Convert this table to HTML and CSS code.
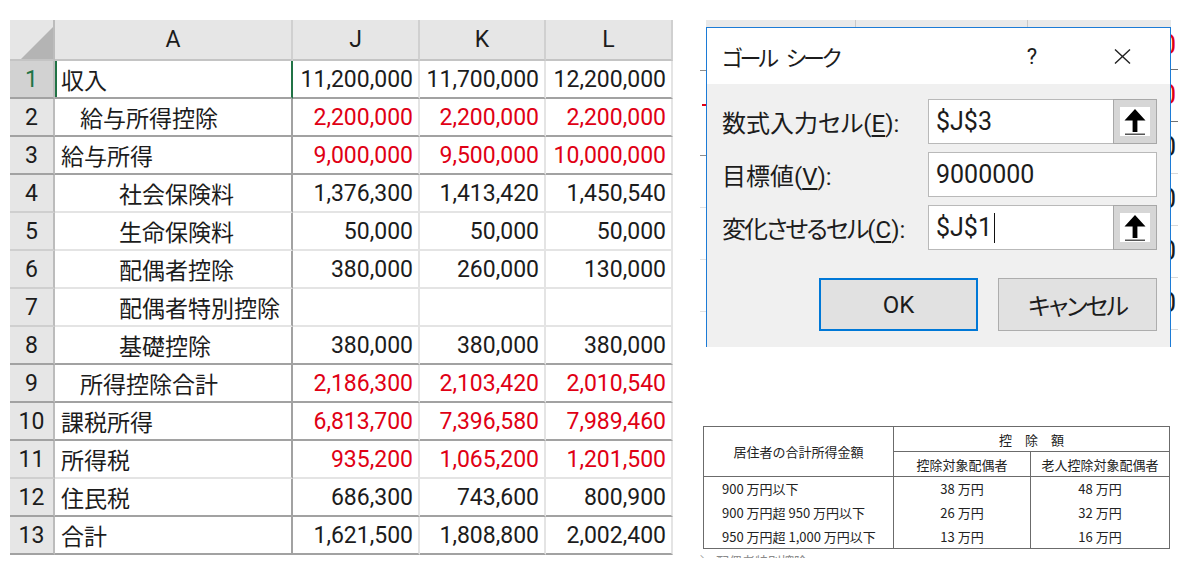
FILE: index.html
```html
<!DOCTYPE html>
<html>
<head>
    <link rel="stylesheet" href="styles.css">
</head>
<body>
    <div class="page">
        <div class="sheet">
            <div class="row head">
                <div class="corner"><span class="tri"></span></div>
                <div>A</div>
                <div>J</div>
                <div>K</div>
                <div>L</div>
            </div>
            <div class="row dk">
                <div class="rh sel">1</div>
                <div class="a cur">収入</div>
                <div class="n">11,200,000</div>
                <div class="n">11,700,000</div>
                <div class="n">12,200,000</div>
            </div>
            <div class="row dk red">
                <div class="rh">2</div>
                <div class="a i1">給与所得控除</div>
                <div class="n">2,200,000</div>
                <div class="n">2,200,000</div>
                <div class="n">2,200,000</div>
            </div>
            <div class="row dk red">
                <div class="rh">3</div>
                <div class="a">給与所得</div>
                <div class="n">9,000,000</div>
                <div class="n">9,500,000</div>
                <div class="n">10,000,000</div>
            </div>
            <div class="row">
                <div class="rh">4</div>
                <div class="a i2">社会保険料</div>
                <div class="n">1,376,300</div>
                <div class="n">1,413,420</div>
                <div class="n">1,450,540</div>
            </div>
            <div class="row">
                <div class="rh">5</div>
                <div class="a i2">生命保険料</div>
                <div class="n">50,000</div>
                <div class="n">50,000</div>
                <div class="n">50,000</div>
            </div>
            <div class="row">
                <div class="rh">6</div>
                <div class="a i2">配偶者控除</div>
                <div class="n">380,000</div>
                <div class="n">260,000</div>
                <div class="n">130,000</div>
            </div>
            <div class="row">
                <div class="rh">7</div>
                <div class="a i2">配偶者特別控除</div>
                <div class="n"></div>
                <div class="n"></div>
                <div class="n"></div>
            </div>
            <div class="row dk">
                <div class="rh">8</div>
                <div class="a i2">基礎控除</div>
                <div class="n">380,000</div>
                <div class="n">380,000</div>
                <div class="n">380,000</div>
            </div>
            <div class="row dk red">
                <div class="rh">9</div>
                <div class="a i1">所得控除合計</div>
                <div class="n">2,186,300</div>
                <div class="n">2,103,420</div>
                <div class="n">2,010,540</div>
            </div>
            <div class="row dk red">
                <div class="rh">10</div>
                <div class="a">課税所得</div>
                <div class="n">6,813,700</div>
                <div class="n">7,396,580</div>
                <div class="n">7,989,460</div>
            </div>
            <div class="row red">
                <div class="rh">11</div>
                <div class="a">所得税</div>
                <div class="n">935,200</div>
                <div class="n">1,065,200</div>
                <div class="n">1,201,500</div>
            </div>
            <div class="row dk">
                <div class="rh">12</div>
                <div class="a">住民税</div>
                <div class="n">686,300</div>
                <div class="n">743,600</div>
                <div class="n">800,900</div>
            </div>
            <div class="row dk">
                <div class="rh">13</div>
                <div class="a">合計</div>
                <div class="n">1,621,500</div>
                <div class="n">1,808,800</div>
                <div class="n">2,002,400</div>
            </div>
        </div>

        <div class="side">
            <div class="behind">
                <div class="bg-left">
                    <div class="lz dark"></div>
                    <div class="lz dark"><span class="dash"></span></div>
                    <div class="lz"></div>
                    <div class="lz"></div>
                    <div class="lz"></div>
                    <div class="lz"></div>
                </div>
                <div class="bg-top">
                    <div></div>
                    <div></div>
                    <div></div>
                </div>
                <div class="bg-right">
                    <div class="z first red">0</div>
                    <div class="z red">0</div>
                    <div class="z">0</div>
                    <div class="z">0</div>
                    <div class="z">0</div>
                    <div class="z">0</div>
                </div>

                <div class="dialog">
                    <div class="dlg-title">
                        <span class="dlg-name">ゴール<span class="gap"></span>シーク</span>
                        <span class="help">?</span>
                        <span class="close">
                            <svg width="17" height="15" viewBox="0 0 17 15">
                                <path d="M1 0.5 L16 14.5 M16 0.5 L1 14.5" stroke="#222" stroke-width="1.4" fill="none"/>
                            </svg>
                        </span>
                    </div>
                    <div class="dlg-form">
                        <div class="label">数式入力セル(<u>E</u>):</div>
                        <div class="field">
                            <span class="val">$J$3</span>
                            <span class="pick">
                                <svg width="30" height="29" viewBox="0 0 30 29">
                                    <rect width="30" height="29" fill="#fff"/>
                                    <path d="M15 2 L25.5 13.5 L17.4 13.5 L17.4 25 L12.6 25 L12.6 13.5 L4.5 13.5 Z" fill="#000"/>
                                    <rect x="5" y="26.5" width="20" height="1.5" fill="#555"/>
                                </svg>
                            </span>
                        </div>
                        <div class="label">目標値(<u>V</u>):</div>
                        <div class="field">
                            <span class="val">9000000</span>
                        </div>
                        <div class="label"><span class="tight">変化させるセル</span>(<u>C</u>):</div>
                        <div class="field">
                            <span class="val">$J$1<span class="caret"></span></span>
                            <span class="pick">
                                <svg width="30" height="29" viewBox="0 0 30 29">
                                    <rect width="30" height="29" fill="#fff"/>
                                    <path d="M15 2 L25.5 13.5 L17.4 13.5 L17.4 25 L12.6 25 L12.6 13.5 L4.5 13.5 Z" fill="#000"/>
                                    <rect x="5" y="26.5" width="20" height="1.5" fill="#555"/>
                                </svg>
                            </span>
                        </div>
                    </div>
                    <div class="dlg-buttons">
                        <div class="btn ok">OK</div>
                        <div class="btn jp">キャンセル</div>
                    </div>
                </div>
            </div>

            <table class="ded">
                <colgroup>
                    <col style="width: 190px">
                    <col style="width: 137px">
                    <col style="width: 139px">
                </colgroup>
                <thead>
                    <tr>
                        <th rowspan="2">居住者の合計所得金額</th>
                        <th colspan="2">控　除　額</th>
                    </tr>
                    <tr>
                        <th>控除対象配偶者</th>
                        <th>老人控除対象配偶者</th>
                    </tr>
                </thead>
                <tbody>
                    <tr>
                        <td class="lt">900 万円以下</td>
                        <td>38 万円</td>
                        <td>48 万円</td>
                    </tr>
                    <tr>
                        <td class="lt">900 万円超 950 万円以下</td>
                        <td>26 万円</td>
                        <td>32 万円</td>
                    </tr>
                    <tr>
                        <td class="lt">950 万円超 1,000 万円以下</td>
                        <td>13 万円</td>
                        <td>16 万円</td>
                    </tr>
                </tbody>
            </table>
            <div class="cut">＼ 配偶者特別控除</div>
        </div>
    </div>
</body>
</html>
```

FILE: styles.css
```css
* {
    margin: 0;
    padding: 0;
    box-sizing: border-box;
}

body {
    background: #fff;
    color: #1c1c1c;
    font-family: Roboto, "Noto Sans CJK JP", sans-serif;
}

.page {
    display: flex;
    align-items: flex-start;
    padding: 20px 0 0 10px;
}

/* spreadsheet */
.sheet {
    display: grid;
    grid-template-columns: 45px 238px 127px 126px 127px;
    grid-template-rows: 41px;
    grid-auto-rows: 38px;
    font-size: 23px;
}

.row {
    display: contents;
}

.row > div {
    display: flex;
    align-items: center;
    white-space: nowrap;
    background: #fff;
    border-right: 2px solid #e4e4e4;
    border-bottom: 2px solid #e4e4e4;
}

.row.dk > div {
    border-bottom-color: #a2a2a2;
}

.row.red > .n {
    color: #e00014;
}

.row > .rh {
    justify-content: center;
    background: #e6e6e6;
    border-right-color: #bcbcbc;
    border-bottom-color: #cfcfcf;
}

.row > .rh.sel {
    background: #d2d2d2;
    color: #217346;
}

.row > .a {
    padding-left: 6px;
    border-right-color: #a2a2a2;
}

.row > .a.i1 {
    padding-left: 25px;
}

.row > .a.i2 {
    padding-left: 64px;
}

.row > .a.cur {
    border-right-color: #217346;
    box-shadow: inset 2px 0 0 #217346;
}

.row > .n {
    justify-content: flex-end;
    padding-right: 5px;
}

.row.head > div {
    justify-content: center;
    background: #e6e6e6;
    border-right-color: #d0d0d0;
    border-bottom-color: #c4c4c4;
}

.row.head > .corner {
    align-items: flex-end;
    justify-content: flex-end;
    border-right-color: #bcbcbc;
}

.tri {
    width: 32px;
    height: 32px;
    background: #b4b4b4;
    clip-path: polygon(100% 0, 100% 100%, 0 100%);
}

/* right side */
.side {
    margin-left: 27px;
    display: flex;
    flex-direction: column;
}

.behind {
    display: grid;
    grid-template-columns: 6px 465px 7px;
    grid-template-rows: 7px 320px;
}

.bg-left {
    grid-row: 1 / 3;
    grid-column: 1;
    overflow: hidden;
}

.lz {
    height: 52px;
    border-bottom: 1px solid #e2e2e2;
}

.lz:first-child {
    height: 51px;
}

.lz.dark {
    border-bottom-color: #8c8c8c;
}

.dash {
    display: block;
    width: 4px;
    height: 2px;
    margin: 33px 0 0 2px;
    background: #e00014;
}

.bg-top {
    grid-row: 1;
    grid-column: 2;
    display: grid;
    grid-template-columns: 150px 172px 1fr;
    background: #e9e9e9;
}

.bg-top > div {
    border-right: 1px solid #c8c8c8;
}

.bg-top > div:last-child {
    border-right: 0;
}

.bg-right {
    grid-row: 1 / 3;
    grid-column: 3;
    overflow: hidden;
}

.z {
    height: 52px;
    line-height: 50px;
    font-size: 27px;
    margin-left: -10px;
    color: #1c1c1c;
    border-bottom: 1px solid #d8d8d8;
}

.z.first {
    height: 50px;
}

.z.red {
    color: #e00014;
    border-bottom-color: #707070;
}

.dialog {
    grid-row: 2;
    grid-column: 2;
    background: #f0f0f0;
    border: 1px solid #1c7bd6;
    border-bottom: 0;
}

.dlg-title {
    height: 56px;
    display: flex;
    align-items: center;
    padding: 0 25px 0 15px;
    background: #fff;
    font-size: 22px;
}

.dlg-name {
    flex: 1;
    display: flex;
    align-items: center;
    font-feature-settings: "palt";
    letter-spacing: -3px;
}

.gap {
    width: 10px;
}

.help {
    width: 40px;
    margin-right: 47px;
    text-align: center;
}

.close {
    width: 46px;
    display: flex;
    justify-content: center;
}

.dlg-form {
    display: grid;
    grid-template-columns: 206px 229px;
    grid-auto-rows: 45px;
    row-gap: 8px;
    align-items: center;
    padding: 15px 13px 0 15px;
}

.label {
    font-size: 24px;
    white-space: nowrap;
    font-feature-settings: "palt";
}

.label .tight {
    letter-spacing: -2px;
}

.label u {
    text-underline-offset: 3px;
}

.field {
    height: 45px;
    display: flex;
    align-items: center;
    background: #fff;
    border: 1px solid #b9b9b9;
    font-size: 25px;
}

.val {
    flex: 1;
    display: flex;
    align-items: center;
    padding-left: 7px;
}

.caret {
    width: 1px;
    height: 30px;
    margin-left: 2px;
    background: #111;
}

.pick {
    width: 44px;
    height: 45px;
    margin-right: -1px;
    display: flex;
    align-items: center;
    justify-content: center;
    background: #d6d6d6;
    border: 1px solid #a8a8a8;
}

.dlg-buttons {
    display: flex;
    justify-content: flex-end;
    gap: 20px;
    padding: 28px 13px 0 0;
}

.btn {
    width: 159px;
    height: 53px;
    display: flex;
    align-items: center;
    justify-content: center;
    background: #e1e1e1;
    border: 1px solid #adadad;
    font-size: 24px;
}

.btn.jp {
    font-feature-settings: "palt";
    letter-spacing: -2px;
}

.btn.ok {
    border: 2px solid #0078d7;
}

/* deduction table */
.ded {
    width: 466px;
    margin: 79px 0 0 3px;
    border-collapse: collapse;
    table-layout: fixed;
    font-family: "Noto Sans CJK JP", sans-serif;
    font-size: 13px;
    color: #222;
}

.ded th,
.ded td {
    border: 1px solid #6b6b6b;
    font-weight: normal;
    text-align: center;
    white-space: nowrap;
}

.ded th {
    height: 25px;
}

.ded td {
    height: 24px;
    border-top: none;
    border-bottom: none;
}

.ded tbody tr:last-child td {
    border-bottom: 1px solid #6b6b6b;
}

.ded td.lt {
    text-align: left;
    padding-left: 18px;
}

.cut {
    height: 5px;
    margin-top: 4px;
    overflow: hidden;
    font-family: "Noto Sans CJK JP", sans-serif;
    font-size: 13px;
    line-height: 16px;
    color: #8a8a8a;
}
```
